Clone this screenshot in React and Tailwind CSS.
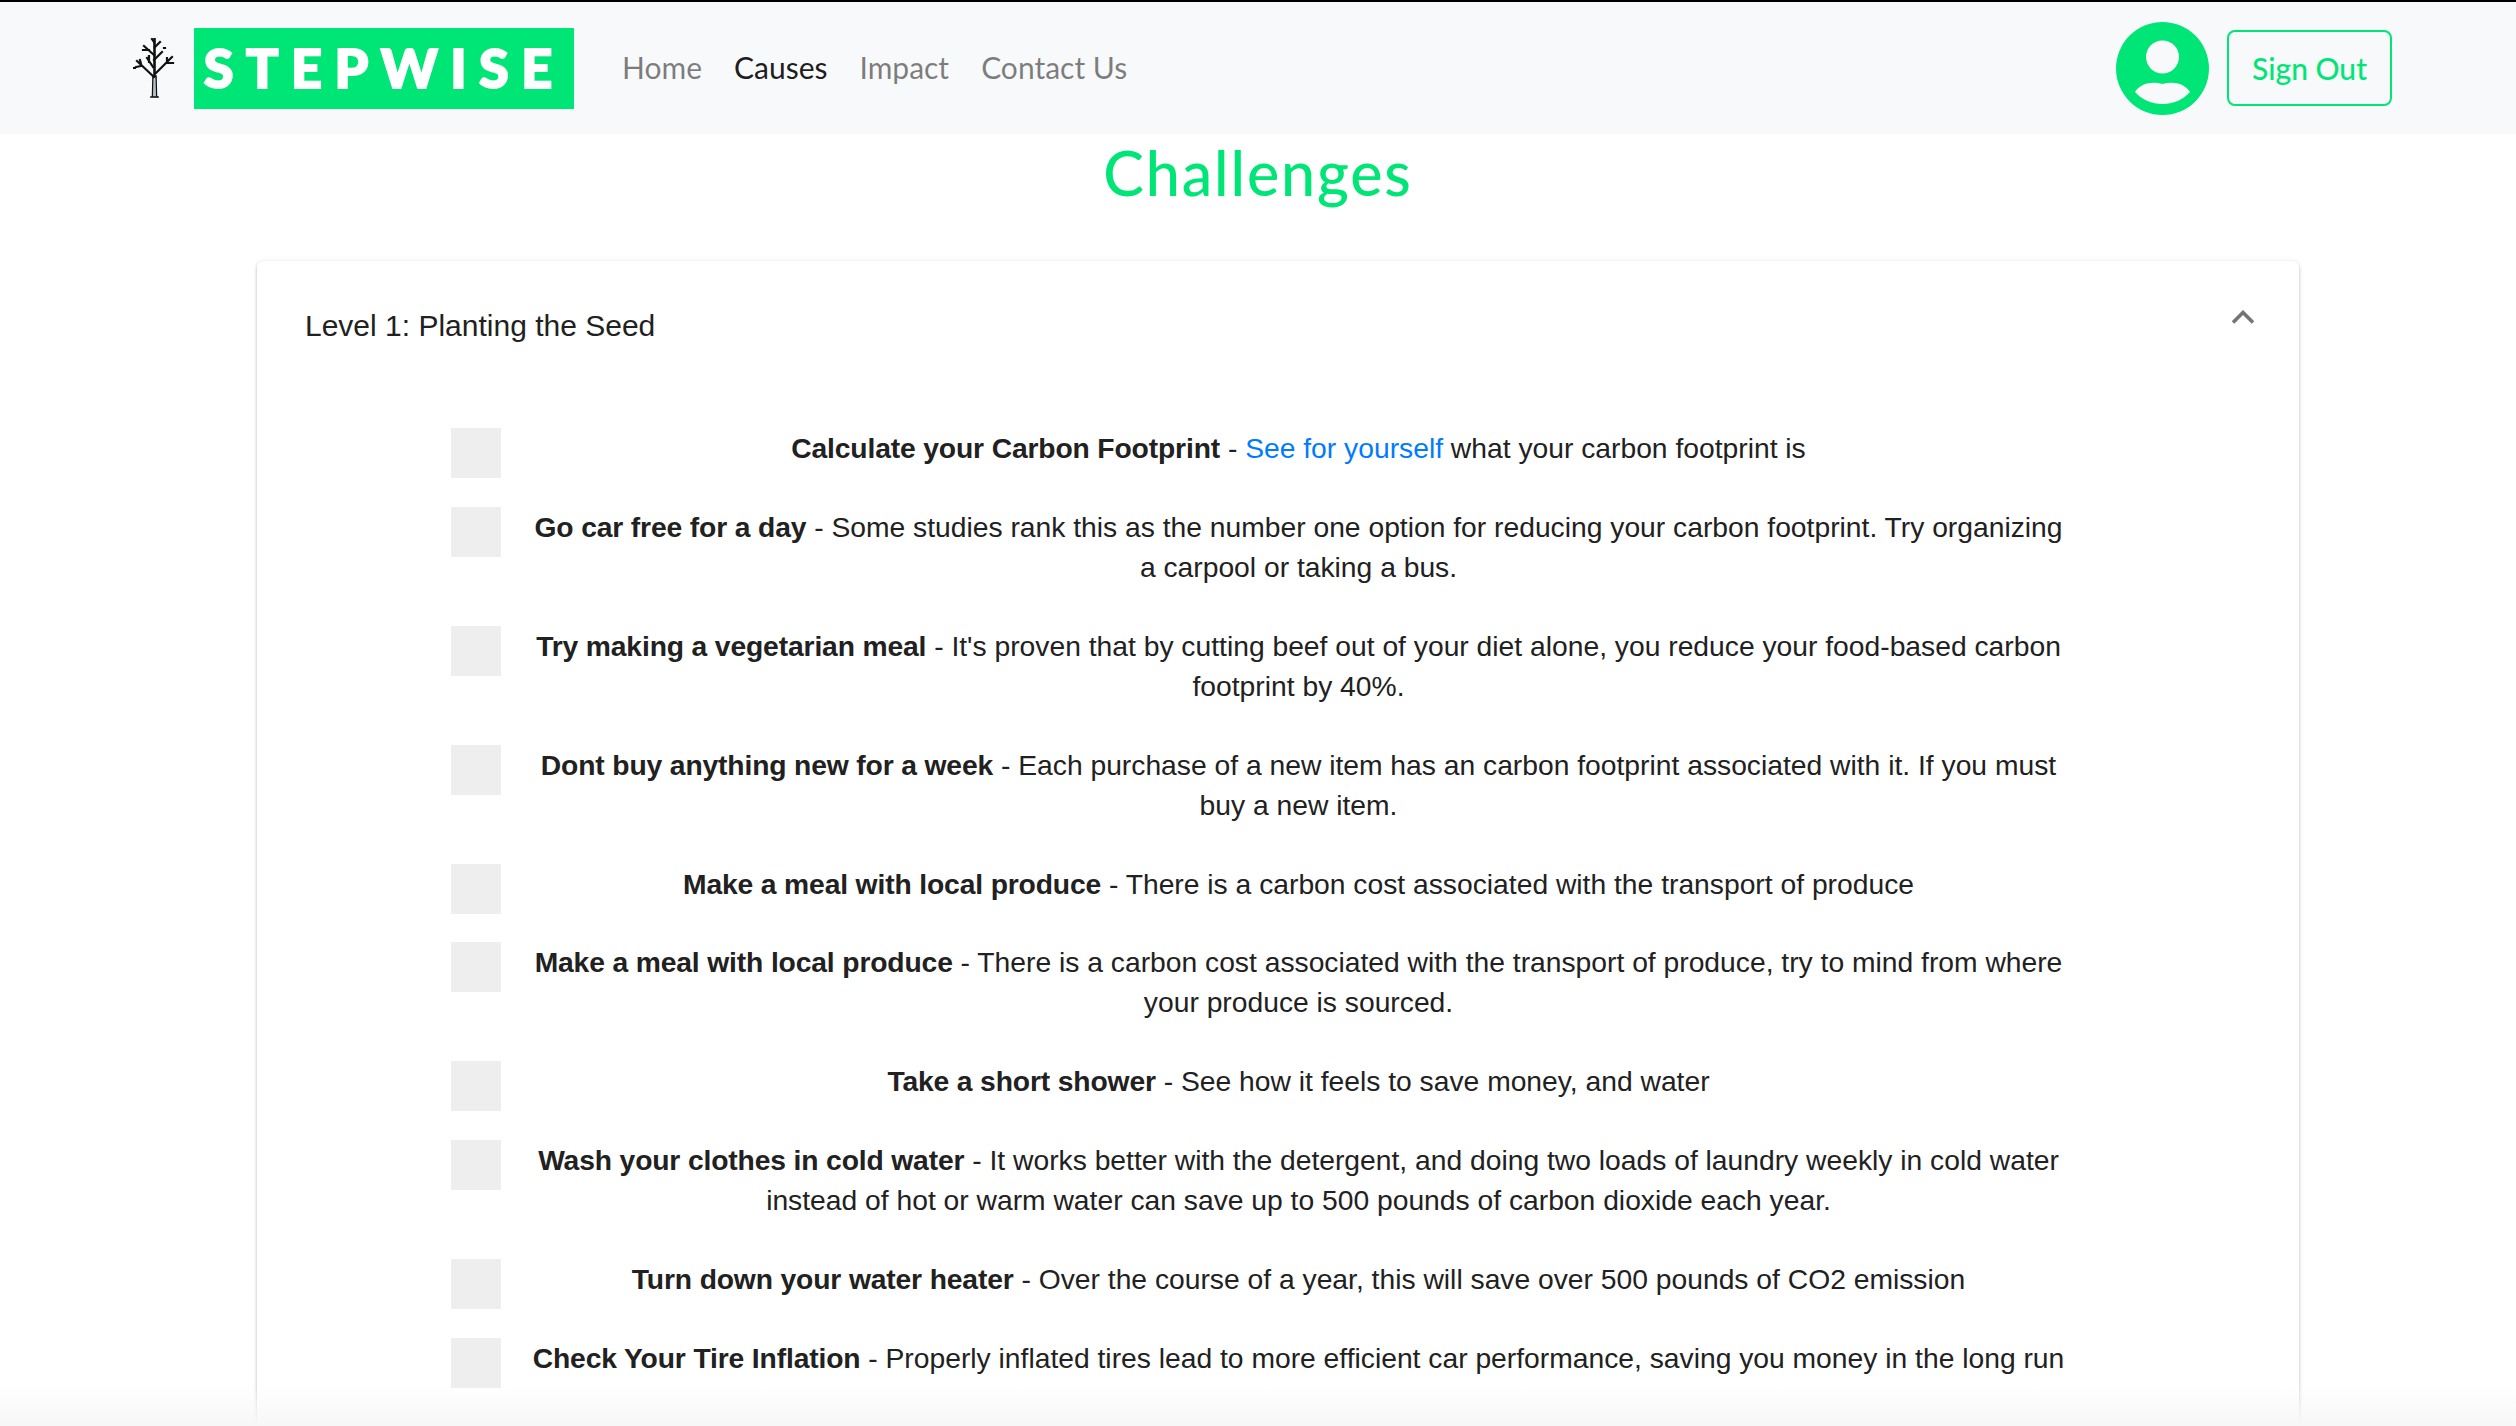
const sans = "font-['Liberation_Sans',Arial,sans-serif]";
const gill = "font-['Lato','Open_Sans',sans-serif]";

const rows = [
  [<>Calculate your Carbon Footprint</>, <> - <a className="text-[#007bff]">See for yourself</a> what your carbon footprint is</>],
  ["Go car free for a day", " - Some studies rank this as the number one option for reducing your carbon footprint. Try organizing a carpool or taking a bus."],
  ["Try making a vegetarian meal", " - It's proven that by cutting beef out of your diet alone, you reduce your food-based carbon footprint by 40%."],
  ["Dont buy anything new for a week", " - Each purchase of a new item has an carbon footprint associated with it. If you must buy a new item."],
  ["Make a meal with local produce", " - There is a carbon cost associated with the transport of produce"],
  ["Make a meal with local produce", " - There is a carbon cost associated with the transport of produce, try to mind from where your produce is sourced."],
  ["Take a short shower", " - See how it feels to save money, and water"],
  ["Wash your clothes in cold water", " - It works better with the detergent, and doing two loads of laundry weekly in cold water instead of hot or warm water can save up to 500 pounds of carbon dioxide each year."],
  ["Turn down your water heater", " - Over the course of a year, this will save over 500 pounds of CO2 emission"],
  ["Check Your Tire Inflation", " - Properly inflated tires lead to more efficient car performance, saving you money in the long run"],
];

function Tree() {
  return (
    <svg viewBox="0 0 42 60" className="h-[60px] w-[42px] shrink-0" fill="none" stroke="#111" strokeWidth="2.2" strokeLinecap="square">
      <path d="M21.5 1V38" strokeWidth="2.6" />
      <path d="M20 38L19.5 58M23 38L23.5 58" strokeWidth="1.5" />
      <path d="M21.5 42V58" stroke="#a9bfcf" strokeWidth="1.6" />
      <path d="M18 59H25" strokeWidth="1.6" />
      <path d="M21 39L4 23M8 26L7 22M8 28L3 29M23 35L39 19M34 25L40 25M34 25L34 20M20 29L14 20M16 24L16 18M21 17L11 8M16 12L10 12M21 22L29 14M22 9L27 4M19 1L21 4" />
      <path d="M0.5 30H2M31 10H32" />
    </svg>
  );
}

function Avatar() {
  return (
    <svg viewBox="0 0 93 93" className="h-[93px] w-[93px] shrink-0">
      <circle cx="46.5" cy="46.5" r="46.5" fill="#00e676" />
      <circle cx="46.5" cy="35" r="16.5" fill="#f8f9fa" />
      <path d="M19 70C24 62 35 59 46.5 62C58 59 69 62 74 70C67 78 57 82 46.5 82C36 82 26 78 19 70Z" fill="#f8f9fa" />
    </svg>
  );
}

export default function App() {
  return (
    <div className={`relative h-[1426px] overflow-hidden bg-white ${sans}`}>
      <header className={`flex h-[134px] items-center border-t-2 border-black bg-[#f8f9fa] pl-[133px] pr-[124px] ${gill}`}>
        <Tree />
        <div className="ml-[19px] flex h-[81px] w-[380px] items-center justify-center bg-[#00e676] pr-[12px]">
          <span className="mr-[-0.23em] text-[54px] leading-none font-black tracking-[0.23em] text-white [-webkit-text-stroke:2px_white]">STEPWISE</span>
        </div>
        <nav className="mb-[2px] ml-[48px] flex items-center gap-[32px] text-[30px] leading-none text-black/50">
          <a>Home</a>
          <a className="text-black/90">Causes</a>
          <a>Impact</a>
          <a>Contact Us</a>
        </nav>
        <div className="ml-auto flex items-center gap-[18px]">
          <Avatar />
          <button className="flex h-[76px] w-[165px] items-center justify-center rounded-[8px] border-2 border-[#00e676] text-[30px] leading-none font-medium text-[#00e676]">Sign Out</button>
        </div>
      </header>
      <h1 className={`mt-[1px] text-center text-[61px] leading-[75px] font-medium tracking-[0.03em] text-[#00e676] ${gill}`}>Challenges</h1>
      <section className="ml-[257px] mr-[217px] mt-[51px] rounded-[6px] bg-white shadow-[0_2px_4px_-1px_rgba(0,0,0,0.2),0_1px_3px_0_rgba(0,0,0,0.12),0_0_6px_0_rgba(0,0,0,0.06)]">
        <div className="flex h-[130px] items-center justify-between pl-[48px] pr-[45px]">
          <span className="text-[30px] leading-[40px] text-[#212121]">Level 1: Planting the Seed</span>
          <svg viewBox="0 0 22 14" className="mb-[18px] h-[14px] w-[22px]" fill="none" stroke="#757575" strokeWidth="3.6"><path d="M1 12.5L11 2.5L21 12.5" /></svg>
        </div>
        <ul className="pb-[200px] pl-[194px] pt-[37px] text-[28.25px] leading-[40px] text-[#212121]">
          {rows.map((r, i) => (
            <li key={i} className="flex items-start">
              <span className="h-[50px] w-[50px] shrink-0 bg-[#eeeeee]" />
              <p className="ml-[25px] w-[1545px] pb-[38.9px] text-center"><b className="tracking-[-0.005em]">{r[0]}</b>{r[1]}</p>
            </li>
          ))}
        </ul>
      </section>
      <div className="absolute inset-x-0 bottom-0 h-[40px] bg-gradient-to-b from-white/0 to-[#f7f7f7]" />
    </div>
  );
}
